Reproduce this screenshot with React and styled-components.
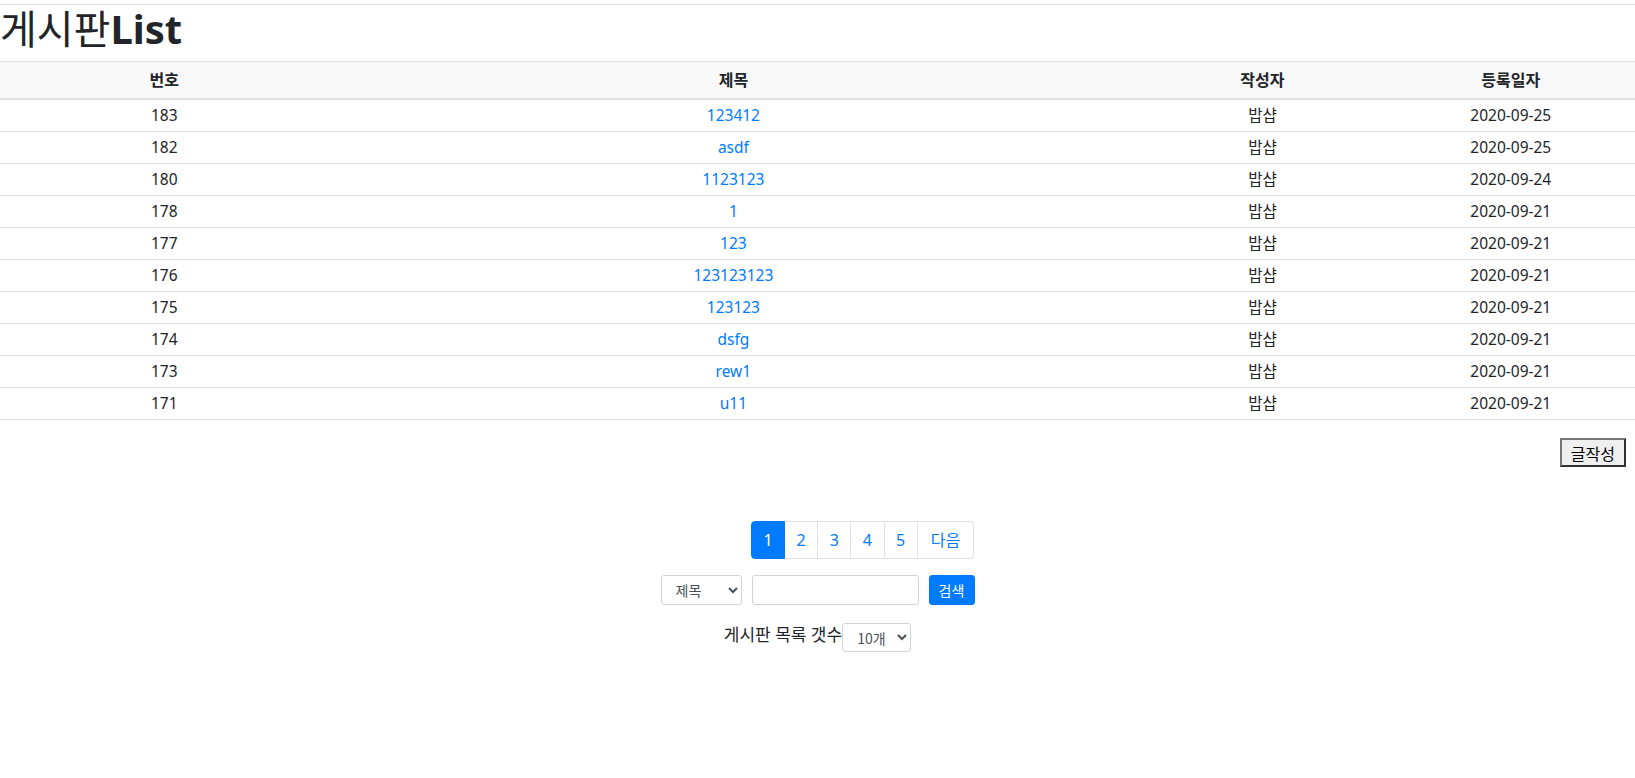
import React from "react";
import styled, { createGlobalStyle } from "styled-components";

const GlobalStyle = createGlobalStyle`
  html, body {
    margin: 0;
    padding: 0;
    background: #fff;
    color: #212529;
    font-family: "Noto Sans", "Noto Sans CJK KR", sans-serif;
    font-size: 16px;
    line-height: 1.5;
  }
`;

const Page = styled.div`
  padding-top: 4px;
`;

const TopRule = styled.div`
  border-top: 1px solid #dee2e6;
`;

const Title = styled.h1`
  margin: 0 0 8px;
  font-size: 40px;
  font-weight: 400;
  line-height: 48px;
  color: #212529;

  b {
    font-weight: 700;
  }
`;

const Table = styled.table`
  width: 100%;
  border-collapse: collapse;
  table-layout: fixed;
`;

const Th = styled.th`
  width: ${(p) => p.$w};
  background: #f8f8f8;
  border-top: 1px solid #dee2e6;
  border-bottom: 2px solid #dee2e6;
  height: 36px;
  padding: 0 4px;
  font-weight: 700;
  text-align: center;
`;

const Td = styled.td`
  border-bottom: 1px solid #dee2e6;
  height: 31px;
  padding: 0 4px;
  font-size: 15.5px;
  text-align: center;
`;

const TitleLink = styled.a`
  color: #007bff;
  text-decoration: none;
`;

const WriteRow = styled.div`
  display: flex;
  justify-content: flex-end;
  padding: 18px 9px 0 0;
`;

const WriteButton = styled.button`
  height: 29px;
  padding: 0 9px;
  font-family: "Noto Sans CJK KR", sans-serif;
  font-size: 16px;
  background: #efefef;
  color: #000;
  border: 2px solid;
  border-color: #767676 #303030 #303030 #767676;
`;

const PagerRow = styled.div`
  display: flex;
  justify-content: center;
  padding: 54px 0 0 90px;
`;

const Pager = styled.ul`
  display: flex;
  margin: 0;
  padding: 0;
  list-style: none;
`;

const PageLink = styled.li`
  height: 36px;
  padding: 0 ${(p) => (p.$wide ? "13px" : "11.5px")};
  margin-left: -1px;
  display: flex;
  align-items: center;
  border: 1px solid #dee2e6;
  background: ${(p) => (p.$active ? "#007bff" : "#fff")};
  border-color: ${(p) => (p.$active ? "#007bff" : "#dee2e6")};
  color: ${(p) => (p.$active ? "#fff" : "#007bff")};
  font-size: 16px;
  line-height: 20px;
  position: relative;
  z-index: ${(p) => (p.$active ? 1 : 0)};

  &:first-child {
    margin-left: 0;
    border-radius: 4px 0 0 4px;
  }
  &:last-child {
    border-radius: 0 4px 4px 0;
  }
`;

const SearchRow = styled.form`
  display: flex;
  justify-content: center;
  align-items: center;
  gap: 10px;
  margin-top: 16px;
`;

const Select = styled.select`
  width: ${(p) => p.$w};
  height: ${(p) => p.$h || "30px"};
  padding: 0 6px 0 10px;
  font-family: "Noto Sans CJK KR", sans-serif;
  font-size: 14px;
  color: #495057;
  background: #fff;
  border: 1px solid #ced4da;
  border-radius: 3px;
`;

const SearchInput = styled.input`
  width: 167px;
  height: 30px;
  box-sizing: border-box;
  border: 1px solid #ced4da;
  border-radius: 3px;
  padding: 0 8px;
`;

const SearchButton = styled.button`
  width: 46px;
  height: 30px;
  border: 1px solid #007bff;
  background: #007bff;
  color: #fff;
  border-radius: 3px;
  font-family: "Noto Sans CJK KR", sans-serif;
  font-size: 14px;
  padding: 0;
`;

const CountRow = styled.div`
  display: flex;
  justify-content: center;
  align-items: center;
  margin-top: 18px;
  font-size: 17px;
  line-height: 22px;
`;

const CountLabel = styled.span`
  margin-top: -6px;
`;

const rows = [
  [183, "123412", "2020-09-25"],
  [182, "asdf", "2020-09-25"],
  [180, "1123123", "2020-09-24"],
  [178, "1", "2020-09-21"],
  [177, "123", "2020-09-21"],
  [176, "123123123", "2020-09-21"],
  [175, "123123", "2020-09-21"],
  [174, "dsfg", "2020-09-21"],
  [173, "rew1", "2020-09-21"],
  [171, "u11", "2020-09-21"],
];

export default function App() {
  return (
    <Page>
      <GlobalStyle />
      <TopRule />
      <Title>
        게시판<b>List</b>
      </Title>
      <Table>
        <thead>
          <tr>
            <Th $w="20%">번호</Th>
            <Th $w="50%">제목</Th>
            <Th $w="15%">작성자</Th>
            <Th $w="15%">등록일자</Th>
          </tr>
        </thead>
        <tbody>
          {rows.map(([no, title, date]) => (
            <tr key={no}>
              <Td>{no}</Td>
              <Td>
                <TitleLink href="#">{title}</TitleLink>
              </Td>
              <Td>밥샵</Td>
              <Td>{date}</Td>
            </tr>
          ))}
        </tbody>
      </Table>

      <WriteRow>
        <WriteButton>글작성</WriteButton>
      </WriteRow>

      <PagerRow>
        <Pager>
          <PageLink $active>1</PageLink>
          <PageLink>2</PageLink>
          <PageLink>3</PageLink>
          <PageLink>4</PageLink>
          <PageLink>5</PageLink>
          <PageLink $wide>다음</PageLink>
        </Pager>
      </PagerRow>

      <SearchRow onSubmit={(e) => e.preventDefault()}>
        <Select $w="81px" defaultValue="title">
          <option value="title">제목</option>
          <option value="content">내용</option>
          <option value="writer">작성자</option>
        </Select>
        <SearchInput type="text" />
        <SearchButton type="submit">검색</SearchButton>
      </SearchRow>

      <CountRow>
        <CountLabel>게시판 목록 갯수</CountLabel>
        <Select $w="69px" $h="29px" defaultValue="10">
          <option value="10">10개</option>
          <option value="20">20개</option>
          <option value="30">30개</option>
        </Select>
      </CountRow>
    </Page>
  );
}
